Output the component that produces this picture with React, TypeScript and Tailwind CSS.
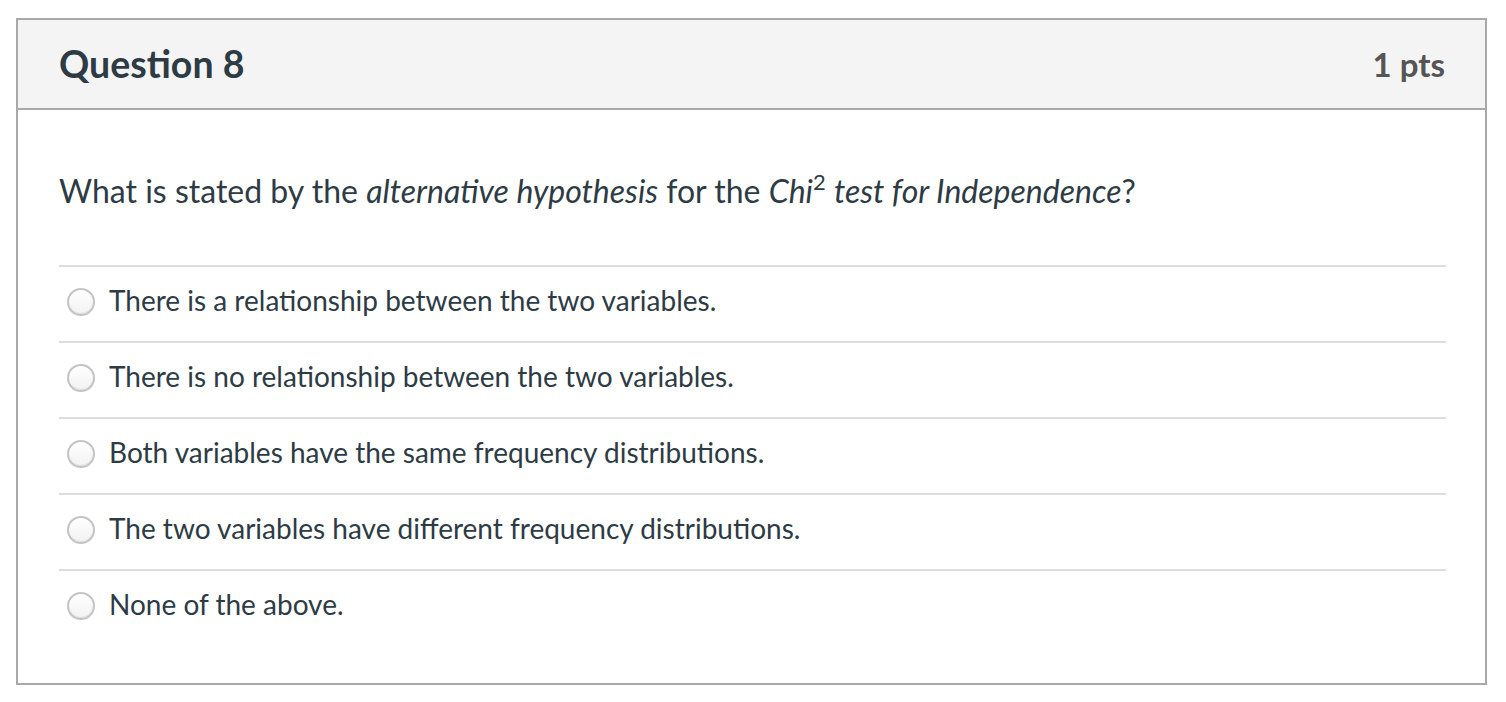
import React from 'react';

const answers = [
  'There is a relationship between the two variables.',
  'There is no relationship between the two variables.',
  'Both variables have the same frequency distributions.',
  'The two variables have different frequency distributions.',
  'None of the above.',
];

const Radio: React.FC = () => (
  <span className="w-[28px] h-[28px] shrink-0 rounded-full border-2 border-[#c4c4c4] bg-gradient-to-b from-white to-[#f2f2f2] shadow-[inset_0_-1px_1px_rgba(0,0,0,0.08)]" />
);

export default function App() {
  return (
    <div className="w-[1506px] h-[702px] bg-white pt-[18px] pl-[16px]" style={{ fontFamily: 'Lato, "Open Sans", sans-serif' }}>
      <div className="w-[1471px] h-[667px] border-2 border-[#a9a9a9] flex flex-col">
        {/* Header */}
        <div className="h-[90px] shrink-0 bg-[#f4f4f4] border-b-2 border-[#a9a9a9] flex items-center justify-between pl-[41px] pr-[40px]">
          <h2 className="text-[37.5px] font-bold text-[#2d3b45] leading-none">Question 8</h2>
          <div className="text-[33px] font-bold text-[#555555] leading-none">1 pts</div>
        </div>

        {/* Body */}
        <div className="pl-[41px] pr-[39px] pt-[62px]">
          <p className="text-[32px] text-[#2d3b45] leading-[38px]">
            What is stated by the <em>alternative hypothesis</em> for the <em>Chi</em>
            <sup className="text-[22px] align-baseline relative top-[-13px]">2</sup> <em>test for Independence</em>?
          </p>

          <div className="mt-[55px]">
            {answers.map((a) => (
              <div key={a} className="h-[76px] border-t-2 border-[#dddddd] flex items-center gap-[14px] pl-[8px] pb-[5px]">
                <Radio />
                <span className="text-[28px] text-[#2d3b45] relative top-[-2px]">{a}</span>
              </div>
            ))}
          </div>
        </div>
      </div>
    </div>
  );
}
